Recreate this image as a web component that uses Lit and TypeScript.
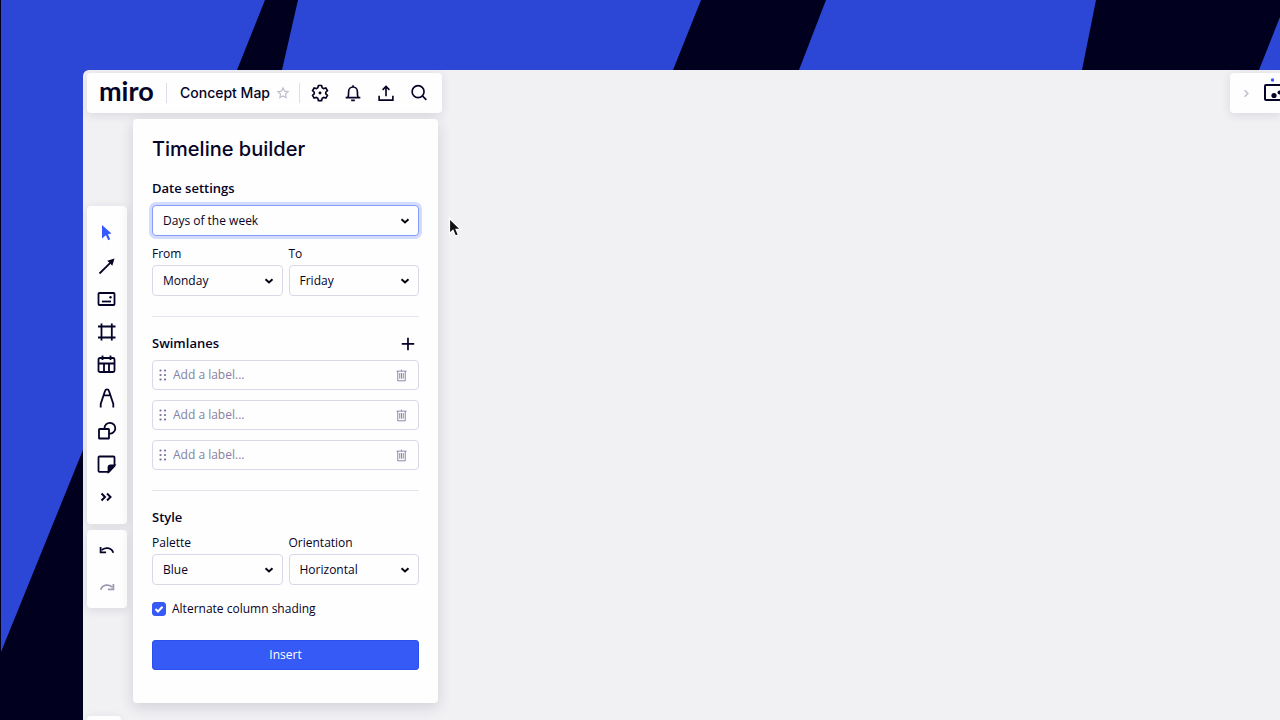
import { LitElement, html, css, svg, nothing } from "lit";
import { customElement, property, state } from "lit/decorators.js";
import { classMap } from "lit/directives/class-map.js";

const toolIcons: Record<string, unknown> = {
  Select: svg`<path d="M7 4 16.500 12.600 12.900 13.200 15.200 18.200 13.200 19.200 10.900 14.200 7 17.500Z" fill="currentColor" stroke="none"/>`,
  Line: svg`<path d="M4.500 19.500 15 9.200"/><path d="M19.500 4.500 17.300 11.700 12.300 6.700Z" fill="currentColor" stroke="none"/>`,
  Card: svg`<rect x="3.500" y="6" width="16" height="12" rx="1"/><path d="M7 14.500h9"/><circle cx="15.500" cy="10.200" r="1.200" fill="currentColor" stroke="none"/>`,
  Frame: svg`<path d="M6.500 3.500v17M16.800 3.500v17M3 6.500h17.500M3 17.500h17.500"/>`,
  Table: svg`<rect x="3.500" y="5" width="16" height="14" rx="1.500"/><path d="M3.500 10.500h16M9 10.500V19M14 10.500V19M7.500 2.500V7M15.500 2.500V7"/>`,
  Pen: svg`<path d="M5.700 21.500v-3.500L10 5q.4-1.700 2-1.700t2 1.700L18.300 18v3.500M9.300 9.300h5.400"/>`,
  Shape: svg`<path d="M9.500 9.500A5.400 5.400 0 1 1 14 14.600"/><rect x="4" y="10" width="10" height="9.500" rx=".6"/>`,
  Sticky: svg`<path d="M4.500 4.500h14q1 0 1 1V14l-5.600 5.800H4.500q-1 0-1-1V5.500q0-1 1-1Z"/><path d="M19.300 13.500h-3.800q-2 0-2 2v4.300Z" fill="currentColor"/>`,
  More: svg`<path d="m6.500 8.500 3.500 3.500-3.500 3.500M12 8.500l3.500 3.500-3.500 3.500" stroke-width="2"/>`,
  Undo: svg`<path d="M6 11.200C9.500 7.300 17.200 8 18.800 14" stroke-width="1.900"/><path d="M5 7.500v6h6" stroke-width="1.900"/>`,
  Redo: svg`<path d="M18 11.200C14.500 7.300 6.800 8 5.200 14" stroke-width="1.900"/><path d="M19 7.500v6h-6" stroke-width="1.900"/>`,
  Settings: svg`<path d="M10.300 3.800h3.400l.7 2.500 1.500.9 2.500-.7 1.700 2.900-1.800 1.800v1.700l1.800 1.800-1.700 2.900-2.500-.7-1.500.9-.7 2.500h-3.400l-.7-2.500-1.500-.9-2.500.7-1.700-2.900 1.800-1.800v-1.700L3.900 9.400l1.700-2.900 2.500.7 1.500-.9Z"/><circle cx="12" cy="12" r="1.600" fill="currentColor" stroke="none"/>`,
  Notifications: svg`<path d="M4 17h16M6.500 16.500c.8-1.400.7-3.600.7-6A4.800 5 0 0 1 16.800 10.500c0 2.400-.1 4.600.7 6M10 20h4M12 3.500v2"/>`,
  Share: svg`<path d="M4.500 15v4.800h15V15M12 15.500V5M8.300 8.500 12 4.800l3.700 3.700"/>`,
  Search: svg`<circle cx="11" cy="10.500" r="6.500"/><path d="m15.700 15.200 4.300 4.300"/>`,
  Add: svg`<path d="M12.500 6v13M6 12.500h13"/>`,
  Delete: svg`<path d="M4 5h16M12 2.500V5M6 5v15.500h12V5M9.200 8v9M12 8v9M14.800 8v9" stroke-width="1.500"/>`,
  Favorite: svg`<path d="m12 4.300 2.300 5 5.400.6-4 3.700 1.100 5.400-4.800-2.700L7.200 19l1.100-5.400-4-3.700 5.400-.6Z"/>`,
  Expand: svg`<path d="m8.500 6 6 6-6 6" stroke-width="2.800"/>`,
};

@customElement("ui-icon")
export class UiIcon extends LitElement {
  static styles = css`
    :host { display: block; width: 22px; height: 22px; }
    .glyph { display: block; width: 100%; height: 100%; fill: none; stroke: currentColor; stroke-width: 1.8; }
  `;
  @property() name = "";
  render() {
    return html`<svg class="glyph" viewBox="0 0 24 24" aria-hidden="true">${toolIcons[this.name] ?? nothing}</svg>`;
  }
}

@customElement("app-root")
export class AppRoot extends LitElement {
  static styles = css`
    :host {
      --ink: #050327;
      --muted: #8582a3;
      --accent: #355af6;
      --line: #d9d8e8;
      --text: "Open Sans", "Noto Sans", sans-serif;
      --display: Inter, "Liberation Sans", sans-serif;
      display: flex;
      position: relative;
      box-sizing: border-box;
      height: 100vh;
      min-height: 640px;
      padding: 70px 0 0 83px;
      overflow: hidden;
      background: #02001f;
      color: var(--ink);
      font: 12px/20px var(--text);
    }
    * { box-sizing: border-box; }
    button { border: 0; padding: 0; background: none; color: inherit; font: inherit; display: grid; place-items: center; cursor: pointer; }
    h1, h2 { margin: 0; }
    .backdrop { position: absolute; left: 0; top: 0; width: 1280px; height: 720px; }
    .board {
      position: relative;
      flex: 1;
      min-width: 0;
      display: flex;
      flex-direction: column;
      gap: 6px;
      padding: 3px 0 0 4px;
      border-radius: 6px 0 0 0;
      background: #f1f1f4;
      overflow: hidden;
    }
    .header { display: flex; justify-content: space-between; }
    .card { background: #fefefe; border-radius: 4px; box-shadow: 0 2px 10px rgba(40, 35, 70, .12); }
    .topbar { display: flex; align-items: center; height: 40px; padding: 0 12px; }
    .logo { font: 700 27px/32px Lato, sans-serif; width: 55px; color: var(--ink); text-decoration: none; margin-top: -4px; }
    .rule { width: 1px; height: 20px; background: #dedde8; }
    .name { font: 500 14px/20px var(--display); margin-left: 13px; white-space: nowrap; }
    .logo + .rule { margin-left: 12px; }
    .star { color: #c0becd; margin: 0 8px 0 5px; }
    .star ui-icon { width: 16px; height: 16px; }
    .actions { display: flex; gap: 11px; margin-left: 9px; }
    .sidebar { display: flex; align-items: center; gap: 10px; width: 50px; height: 40px; padding-left: 10px; border-radius: 4px 0 0 4px; overflow: hidden; }
    .sidebar .expand { color: #bfbdcb; }
    .expand ui-icon { width: 13px; height: 13px; }
    .frames { flex: none; width: 22px; height: 32px; }
    .body { display: flex; align-items: flex-start; gap: 6px; flex: 1; min-height: 0; }
    .rail { display: flex; flex-direction: column; gap: 6px; height: 100%; padding-top: 87px; }
    .tools { display: grid; grid-auto-rows: 33px; width: 40px; padding: 10px 0 11px; }
    .tools ui-icon { width: 24px; height: 24px; }
    .history { display: grid; grid-auto-rows: 37px; width: 40px; padding: 2px 0; }
    .active { color: #3859ff; }
    .faded { color: #9a98b3; }
    .drawer { width: 34px; height: 4px; margin-top: auto; border-radius: 4px 4px 0 0; }
    .panel { width: 305px; padding: 18px 19px 33px; box-shadow: 0 4px 14px rgba(40, 35, 70, .16); display: flex; flex-direction: column; }
    .title { font: 500 20px/24px var(--display); }
    .subtitle { font-size: 13px; line-height: 20px; font-weight: 600; }
    .section { display: flex; flex-direction: column; }
    .dates { margin-top: 17px; }
    .dates .wide { margin-top: 7px; }
    .pair { display: grid; grid-template-columns: 1fr 1fr; gap: 6px; }
    .dates .pair { margin-top: 8px; }
    .style .pair { margin-top: 6px; }
    .field { display: grid; grid-template-rows: 21px 31px; }
    .picker { display: grid; align-items: center; }
    .picker > * { grid-area: 1 / 1; }
    .chevron { justify-self: end; width: 10px; height: 8px; margin-right: 9px; fill: none; stroke: #050510; stroke-width: 2; pointer-events: none; }
    .select { appearance: none; width: 100%; height: 31px; padding: 0 24px 0 10px; border: 1px solid var(--line); border-radius: 4px; background: #fefefe; color: inherit; font: inherit; outline: none; }
    .focused { border-color: #859cfc; box-shadow: 0 0 0 3px #d3dcfc; }
    .divider { width: 100%; height: 1px; margin: 20px 0 16px; border: 0; background: #e5e4ed; }
    .heading { display: flex; align-items: center; justify-content: space-between; height: 20px; margin-bottom: 7px; }
    .heading ui-icon { width: 23px; height: 23px; }
    .lanes { display: grid; gap: 10px; margin: 0; padding: 0; list-style: none; }
    .lane { display: flex; align-items: center; height: 30px; padding: 0 9px 0 6px; border: 1px solid var(--line); border-radius: 4px; color: var(--muted); }
    .grip { width: 8px; height: 12px; fill: #716e91; }
    .label { flex: 1; min-width: 0; height: 20px; margin-left: 6px; padding: 0; border: 0; outline: 0; background: none; color: var(--ink); font: inherit; }
    .label::placeholder { color: var(--muted); opacity: 1; }
    .lane ui-icon { width: 15px; height: 15px; }
    .check { display: flex; align-items: center; gap: 6px; margin: 14px 0 21px; }
    .tick { display: grid; width: 14px; height: 14px; }
    .tick > * { grid-area: 1 / 1; }
    .box { appearance: none; width: 14px; height: 14px; margin: 0; border: 1px solid var(--accent); border-radius: 3px; }
    .box:checked { background: var(--accent); }
    .mark { width: 14px; height: 14px; fill: none; stroke: #fff; stroke-width: 2; pointer-events: none; }
    .insert { height: 30px; border: 1px solid #2b4fed; border-radius: 3px; background: var(--accent); color: #fff; }
    .cursor { position: absolute; left: 447px; top: 217px; width: 16px; height: 23px; }
  `;

  @state() private shading = true;
  @state() private lanes = ["", "", ""];

  private picker(id: string, options: string[], focused = false) {
    return html`<div class="picker">
      <select id=${id} aria-label=${focused ? "Date settings" : nothing} class=${classMap({ select: true, focused })}>
        ${options.map((o) => html`<option>${o}</option>`)}
      </select>
      <svg class="chevron" viewBox="0 0 10 8" aria-hidden="true"><path d="m1.500 2.300 3.500 3.200 3.500-3.200"/></svg>
    </div>`;
  }

  private field(id: string, label: string, options: string[]) {
    return html`<div class="field"><label for=${id}>${label}</label>${this.picker(id, options)}</div>`;
  }

  private tool(name: string, extra = "") {
    return html`<button type="button" class=${extra} aria-label=${name}><ui-icon name=${name}></ui-icon></button>`;
  }

  render() {
    return html`
      <svg class="backdrop" viewBox="0 0 1280 720" aria-hidden="true">
        <path fill="#2c46d5" d="M1 0H265L237 70H100V408L1 652ZM298 0H701L673 70H282ZM826 0H1096L1082 70H799ZM1280 17V70H1259Z"/>
      </svg>
      <main class="board">
        <header class="header">
          <nav class="topbar card" aria-label="Board">
            <a class="logo" href="#">miro</a>
            <span class="rule"></span>
            <span class="name">Concept Map</span>
            ${this.tool("Favorite", "star")}
            <span class="rule"></span>
            <div class="actions">
              ${["Settings", "Notifications", "Share", "Search"].map((n) => this.tool(n))}
            </div>
          </nav>
          <div class="sidebar card">
            ${this.tool("Expand", "expand")}
            <button type="button" class="frames" aria-label="Frames">
              <svg width="22" height="32" viewBox="0 0 22 32" aria-hidden="true">
                <circle cx="9.500" cy="3" r="1.700" fill="#3859ff"/>
                <rect x="2" y="8" width="17" height="15" rx="1" fill="none" stroke="#050327" stroke-width="2"/>
                <circle cx="11" cy="18.500" r="2.600" fill="#050327"/><circle cx="16.500" cy="15.500" r="2" fill="#050327"/>
              </svg>
            </button>
          </div>
        </header>
        <div class="body">
          <div class="rail">
            <nav class="tools card" aria-label="Tools">
              ${["Select", "Line", "Card", "Frame", "Table", "Pen", "Shape", "Sticky", "More"].map((n) =>
                this.tool(n, n === "Select" ? "active" : "")
              )}
            </nav>
            <div class="history card">${this.tool("Undo")}${this.tool("Redo", "faded")}</div>
            <div class="drawer card"></div>
          </div>
          <form class="panel card" @submit=${(e: Event) => e.preventDefault()}>
            <h1 class="title">Timeline builder</h1>
            <section class="section dates">
              <h2 class="subtitle">Date settings</h2>
              <div class="wide">${this.picker("unit", ["Days of the week", "Months"], true)}</div>
              <div class="pair">
                ${this.field("from", "From", ["Monday", "Tuesday"])} ${this.field("to", "To", ["Friday", "Saturday"])}
              </div>
            </section>
            <hr class="divider" />
            <section class="section">
              <div class="heading">
                <h2 class="subtitle">Swimlanes</h2>
                <button type="button" aria-label="Add swimlane" @click=${() => (this.lanes = [...this.lanes, ""])}>
                  <ui-icon name="Add"></ui-icon>
                </button>
              </div>
              <ul class="lanes">
                ${this.lanes.map(
                  (lane, i) => html`<li class="lane">
                    <svg class="grip" viewBox="0 0 8 12" aria-hidden="true">
                      ${[1.5, 6, 10.5].map((y) => svg`<circle cx="1.500" cy=${y} r="1.100"/><circle cx="6" cy=${y} r="1.100"/>`)}
                    </svg>
                    <input class="label" type="text" placeholder="Add a label..." aria-label="Swimlane ${i + 1}" .value=${lane} />
                    <button type="button" aria-label="Delete swimlane ${i + 1}"
                      @click=${() => (this.lanes = this.lanes.filter((_, k) => k !== i))}>
                      <ui-icon name="Delete"></ui-icon>
                    </button>
                  </li>`
                )}
              </ul>
            </section>
            <hr class="divider" />
            <section class="section style">
              <h2 class="subtitle">Style</h2>
              <div class="pair">
                ${this.field("palette", "Palette", ["Blue", "Green"])}
                ${this.field("orientation", "Orientation", ["Horizontal", "Vertical"])}
              </div>
              <label class="check">
                <span class="tick">
                  <input class="box" type="checkbox" .checked=${this.shading}
                    @change=${(e: Event) => (this.shading = (e.target as HTMLInputElement).checked)} />
                  ${this.shading
                    ? html`<svg class="mark" viewBox="0 0 14 14" aria-hidden="true"><path d="m3.500 7 2.500 2.500 4.500-4.700"/></svg>`
                    : nothing}
                </span>
                Alternate column shading
              </label>
              <button class="insert">Insert</button>
            </section>
          </form>
        </div>
      </main>
      <svg class="cursor" viewBox="0 0 16 23" aria-hidden="true">
        <path d="M2.500 1.500v15l3.500-3.200 2.400 5.700 3-1.300-2.400-5.400h4.500Z" fill="#111" stroke="#fff" stroke-width="1.200"/>
      </svg>
    `;
  }
}
